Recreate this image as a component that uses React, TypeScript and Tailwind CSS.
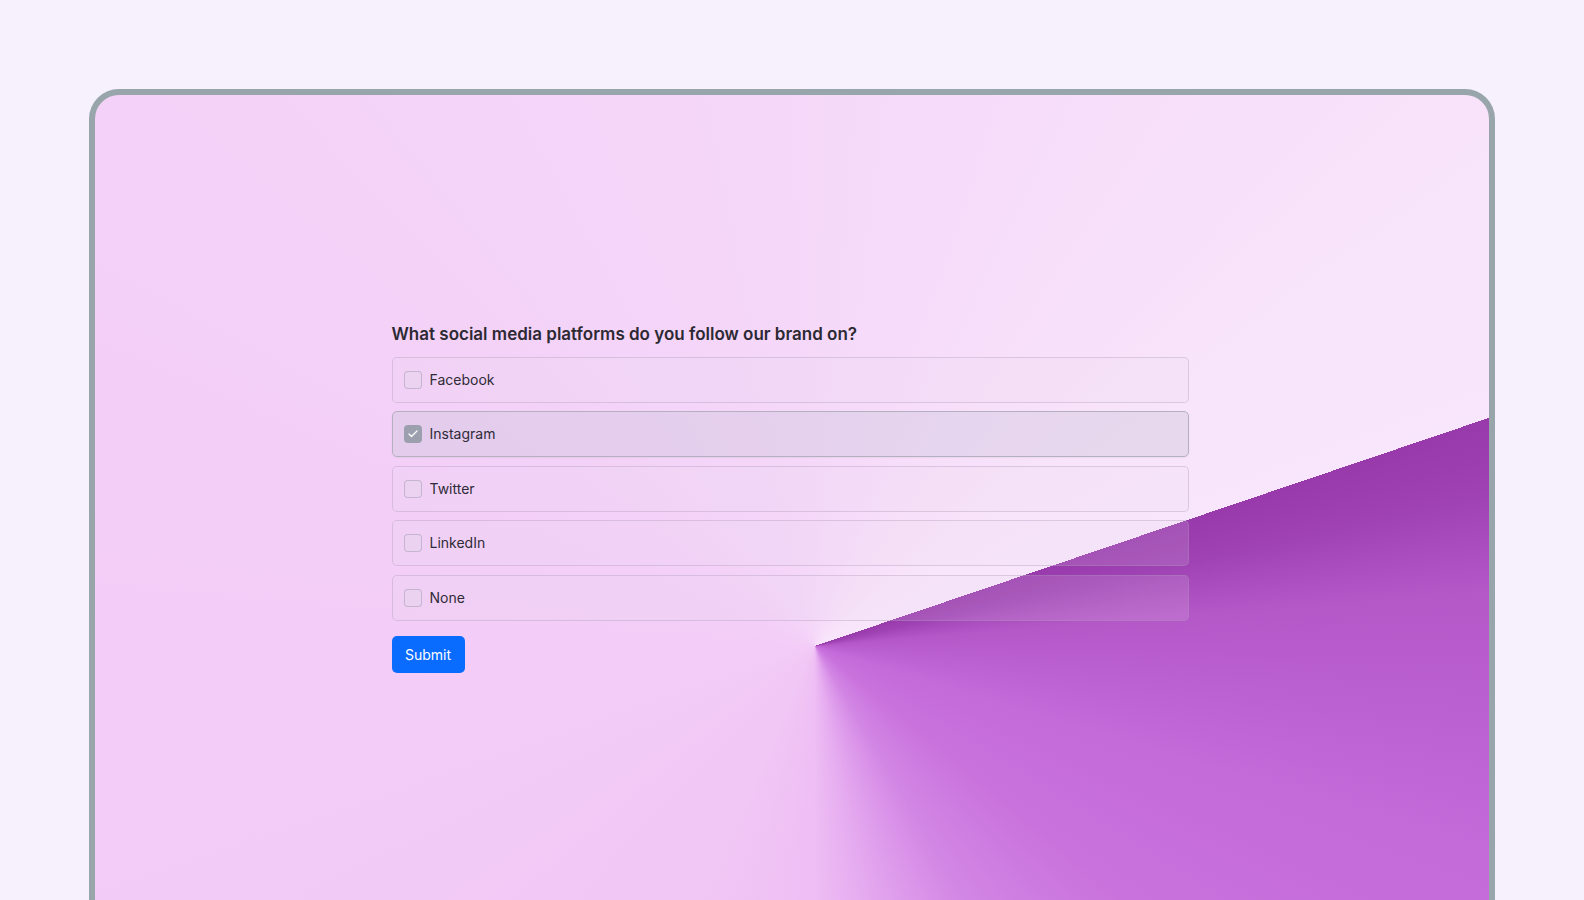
import React from "react";
import { Check } from "lucide-react";

const options = [
  { label: "Facebook", checked: false },
  { label: "Instagram", checked: true },
  { label: "Twitter", checked: false },
  { label: "LinkedIn", checked: false },
  { label: "None", checked: false },
];

export default function App() {
  return (
    <div className="h-screen w-full overflow-hidden bg-[#f6f1fd] px-[89px] pt-[89px] font-['Inter','Noto_Sans',sans-serif]">
      <div className="h-[900px] w-full overflow-hidden rounded-[30px] border-[6px] border-[#98a5aa] bg-[conic-gradient(from_71.3deg_at_720px_551px,#9839ac_0deg,#9f42b3_6deg,#b458c8_14deg,#c46ad9_36deg,#c972dd_58deg,#d286e4_78deg,#dc98ea_88deg,#e6adf0_99deg,#eebef4_109deg,#f1c7f5_133deg,#f3cdf7_200deg,#f5d7f9_280deg,#f7dffa_320deg,#f8e4fb_345deg,#f8e6fc_360deg)]">
        <div className="mx-auto w-[797px] -translate-x-[2px] pt-[227px]">
          <h2 className="mb-[11px] text-[17px] font-semibold leading-6 text-[#2c2933]">
            What social media platforms do you follow our brand on?
          </h2>
          <div className="flex flex-col gap-[8.4px]">
            {options.map((o) => (
              <label
                key={o.label}
                className={
                  o.checked
                    ? "flex h-[46px] items-center gap-2 rounded-[5px] border border-[#b3b1c0] bg-[rgba(205,198,220,0.4)] px-[11px] shadow-[0_1px_2px_rgba(0,0,0,0.05)]"
                    : "flex h-[46px] items-center gap-2 rounded-[5px] border border-[rgba(165,150,180,0.35)] bg-[rgba(228,218,236,0.16)] px-[11px]"
                }
              >
                {o.checked ? (
                  <span className="flex h-[18px] w-[18px] items-center justify-center rounded-[4px] bg-[#9ca0ae]">
                    <Check size={12} strokeWidth={2.5} color="#ffffff" />
                  </span>
                ) : (
                  <span className="h-[18px] w-[18px] rounded-[4px] border-[1.5px] border-[rgba(170,160,185,0.6)] bg-[rgba(225,215,235,0.35)]" />
                )}
                <span className="text-[14px] leading-5 text-[#2f2b37]">{o.label}</span>
              </label>
            ))}
          </div>
          <button className="mt-[15px] h-[37px] w-[73px] rounded-[5px] bg-[#0a6cff] text-[14px] text-white">
            Submit
          </button>
        </div>
      </div>
    </div>
  );
}
